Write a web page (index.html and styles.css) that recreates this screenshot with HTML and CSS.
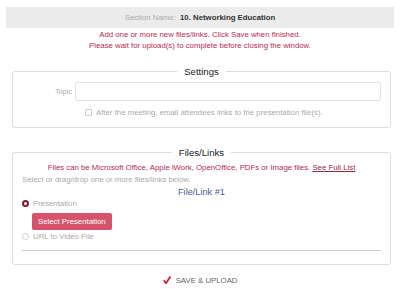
FILE: index.html
```html
<!DOCTYPE html>
<html lang="en">
<head>
    <meta charset="UTF-8">
    <meta name="viewport" content="width=device-width, initial-scale=1.0">
    <title>Add Files/Links</title>
    <link rel="stylesheet" href="styles.css">
</head>
<body>

<div class="section-bar">
    <span class="section-label">Section Name:</span>
    <strong>10. Networking Education</strong>
</div>

<div class="notice">
    Add one or more new files/links. Click Save when finished.<br>
    Please wait for upload(s) to complete before closing the window.
</div>

<!-- Settings -->
<fieldset class="panel settings">
    <legend>Settings</legend>
    <div class="topic-row">
        <label class="topic-label" for="topic">Topic</label>
        <input type="text" id="topic" class="topic-input">
    </div>
    <label class="check-row">
        <input type="checkbox" class="check">
        After the meeting, email attendees links to the presentation file(s).
    </label>
</fieldset>

<!-- Files / Links -->
<fieldset class="panel files">
    <legend>Files/Links</legend>
    <div class="file-types">
        Files can be Microsoft Office, Apple iWork, OpenOffice, PDFs or Image files. <a href="#">See Full List</a>
    </div>
    <div class="hint">Select or drag/drop one or more files/links below.</div>
    <div class="file-title">File/Link #1</div>

    <label class="radio-row">
        <input type="radio" name="kind" class="radio" checked>
        Presentation
    </label>
    <button class="select-button">Select Presentation</button>
    <label class="radio-row url-row">
        <input type="radio" name="kind" class="radio">
        URL to Video File
    </label>
    <hr class="divider">
</fieldset>

<div class="save">
    <svg class="save-icon" width="8" height="8" viewBox="0 0 8 8">
        <path d="M0.8 4.2 L3 7.2 L7.4 0.6" fill="none" stroke="#c4223c" stroke-width="1.8" stroke-linejoin="round"/>
    </svg>
    SAVE &amp; UPLOAD
</div>

</body>
</html>
```

FILE: styles.css
```css
/* Global Styles */
body {
    font-family: 'Liberation Sans', Arial, sans-serif;
    font-size: 7.8px;
    margin: 0;
    padding: 0;
    background-color: #ffffff;
    color: #333333;
}

/* Section name bar */
.section-bar {
    margin: 7px 6px 0;
    height: 21px;
    line-height: 21px;
    background-color: #ebebeb;
    text-align: center;
    font-size: 7.8px;
}

.section-label {
    color: #aaaaaa;
    margin-right: 2px;
}

.section-bar strong {
    color: #333333;
}

.notice {
    color: #b52a52;
    text-align: center;
    line-height: 11.5px;
    padding-top: 0.5px;
}

/* Fieldset panels */
.panel {
    margin: 14px 9px 0 12px;
    border: 1px solid #dddddd;
    border-radius: 3px;
    padding: 4px 9px 8px;
}

.panel legend {
    margin: 0 auto;
    padding: 0 7px;
    font-size: 9.6px;
    line-height: 12px;
    color: #222222;
}

.files {
    margin-top: 19px;
    padding-top: 3px;
    padding-bottom: 13px;
}

/* Settings content */
.topic-row {
    display: flex;
    align-items: center;
}

.topic-label {
    width: 50px;
    margin-right: 3px;
    text-align: right;
    color: #aaaaaa;
    font-size: 7.2px;
}

.topic-input {
    flex: 1;
    height: 19px;
    box-sizing: border-box;
    margin: 0;
    border: 1px solid #e3e3e3;
    border-radius: 2px;
}

.check-row {
    display: flex;
    align-items: center;
    margin-top: 6px;
    padding-left: 63px;
    line-height: 12px;
    color: #aaaaaa;
}

.check {
    appearance: none;
    width: 7px;
    height: 7px;
    margin: 0 4px 0 0;
    border: 1px solid #cccccc;
    border-radius: 1px;
}

/* Files content */
.file-types {
    color: #b52a52;
    text-align: center;
    line-height: 12px;
}

.file-types a {
    color: #8c2a44;
}

.hint {
    color: #aaaaaa;
    line-height: 12px;
}

.file-title {
    text-align: center;
    color: #3f6286;
    font-size: 9.2px;
    line-height: 13px;
}

.radio-row {
    display: flex;
    align-items: center;
    height: 10px;
    color: #aaaaaa;
}

.radio {
    appearance: none;
    width: 7px;
    height: 7px;
    margin: 0 4px 0 0;
    border: 1px solid #cccccc;
    border-radius: 50%;
    box-sizing: border-box;
}

.radio:checked {
    border: 2.5px solid #7c1b2e;
}

.select-button {
    display: block;
    margin: 4px 0 0 10px;
    height: 17px;
    padding: 0 6px;
    border: none;
    border-radius: 2px;
    background-color: #d6546b;
    color: #ffffff;
    font-family: inherit;
    font-size: 7.8px;
}

.url-row {
    margin-top: 2px;
}

.divider {
    margin: 8px 0 0;
    border: none;
    border-top: 1px solid #cccccc;
}

/* Save */
.save {
    margin-top: 10px;
    line-height: 12px;
    text-align: center;
    color: #666666;
}

.save-icon {
    vertical-align: -1px;
    margin-right: 3px;
}
```
